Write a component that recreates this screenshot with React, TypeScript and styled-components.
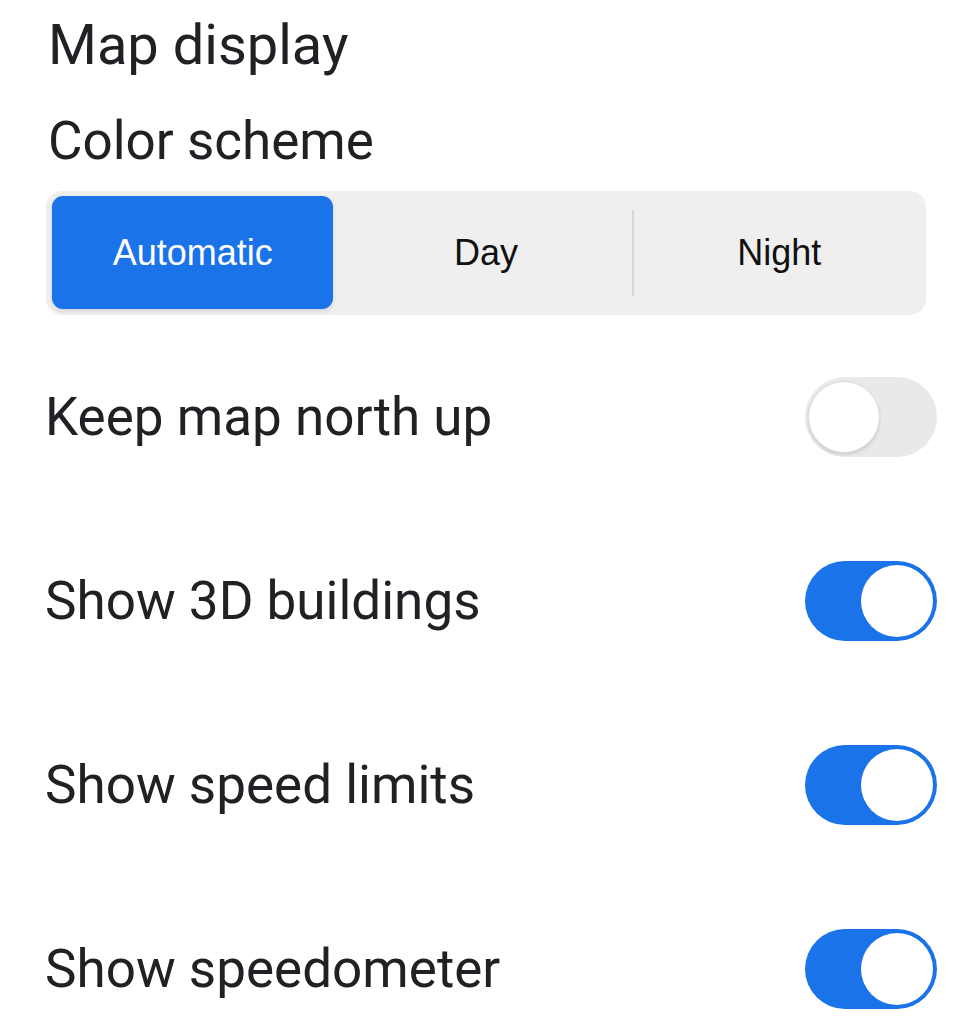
import React from "react";
import styled, { createGlobalStyle } from "styled-components";

const GlobalStyle = createGlobalStyle`
  body {
    margin: 0;
    background: #ffffff;
    font-family: Roboto, "Liberation Sans", sans-serif;
    color: #202124;
  }
`;

const Page = styled.div`
  width: 971px;
  padding: 11px 34px 0 46px;
  box-sizing: border-box;
`;

const Title = styled.h1`
  margin: 0 0 0 2px;
  font-size: 56px;
  line-height: 68px;
  font-weight: 400;
`;

const Subtitle = styled.h2`
  margin: 31px 0 0 2px;
  font-size: 53px;
  line-height: 62px;
  font-weight: 400;
`;

const Segmented = styled.div`
  margin-top: 19px;
  width: 880px;
  height: 124px;
  background: #efefef;
  border-radius: 16px;
  display: grid;
  grid-template-columns: repeat(3, 1fr);
  align-items: stretch;
`;

const Segment = styled.div<{ $active?: boolean; $divider?: boolean }>`
  display: flex;
  align-items: center;
  justify-content: center;
  margin: ${(p) => (p.$active ? "5px 6px 6px" : "0")};
  font-family: "Liberation Sans", Arial, sans-serif;
  font-size: 36px;
  border-radius: 11px;
  background: ${(p) => (p.$active ? "#1a73e8" : "transparent")};
  color: ${(p) => (p.$active ? "#ffffff" : "#111111")};
  box-shadow: ${(p) => (p.$active ? "0 2px 4px rgba(0,0,0,0.12)" : "none")};
  position: relative;
  &::before {
    content: "";
    display: ${(p) => (p.$divider ? "block" : "none")};
    position: absolute;
    left: -1px;
    top: 19px;
    bottom: 19px;
    width: 2px;
    background: #d6d6d6;
  }
`;

const Rows = styled.div`
  margin-top: 10px;
`;

const Row = styled.div`
  height: 184px;
  display: flex;
  align-items: center;
  justify-content: space-between;
  margin-left: -1px;
`;

const Label = styled.span`
  font-size: 53px;
  line-height: 62px;
`;

const Track = styled.div<{ $on: boolean }>`
  position: relative;
  width: 132px;
  height: 80px;
  border-radius: 40px;
  background: ${(p) => (p.$on ? "#1a73e8" : "#e9e9e9")};
  flex-shrink: 0;
`;

const Knob = styled.div<{ $on: boolean }>`
  position: absolute;
  top: 4px;
  left: ${(p) => (p.$on ? "56px" : "3px")};
  width: 72px;
  height: 72px;
  box-sizing: border-box;
  border-radius: 50%;
  background: #ffffff;
  border: ${(p) => (p.$on ? "none" : "1.5px solid #dcdcdc")};
  box-shadow: ${(p) => (p.$on ? "none" : "0 2px 3px rgba(0,0,0,0.12)")};
`;

const Toggle = ({ on }: { on: boolean }) => (
  <Track $on={on}>
    <Knob $on={on} />
  </Track>
);

const settings = [
  { label: "Keep map north up", on: false },
  { label: "Show 3D buildings", on: true },
  { label: "Show speed limits", on: true },
  { label: "Show speedometer", on: true },
];

export default function App() {
  return (
    <Page>
      <GlobalStyle />
      <Title>Map display</Title>
      <Subtitle>Color scheme</Subtitle>
      <Segmented>
        <Segment $active>Automatic</Segment>
        <Segment>Day</Segment>
        <Segment $divider>Night</Segment>
      </Segmented>
      <Rows>
        {settings.map((s) => (
          <Row key={s.label}>
            <Label>{s.label}</Label>
            <Toggle on={s.on} />
          </Row>
        ))}
      </Rows>
    </Page>
  );
}
